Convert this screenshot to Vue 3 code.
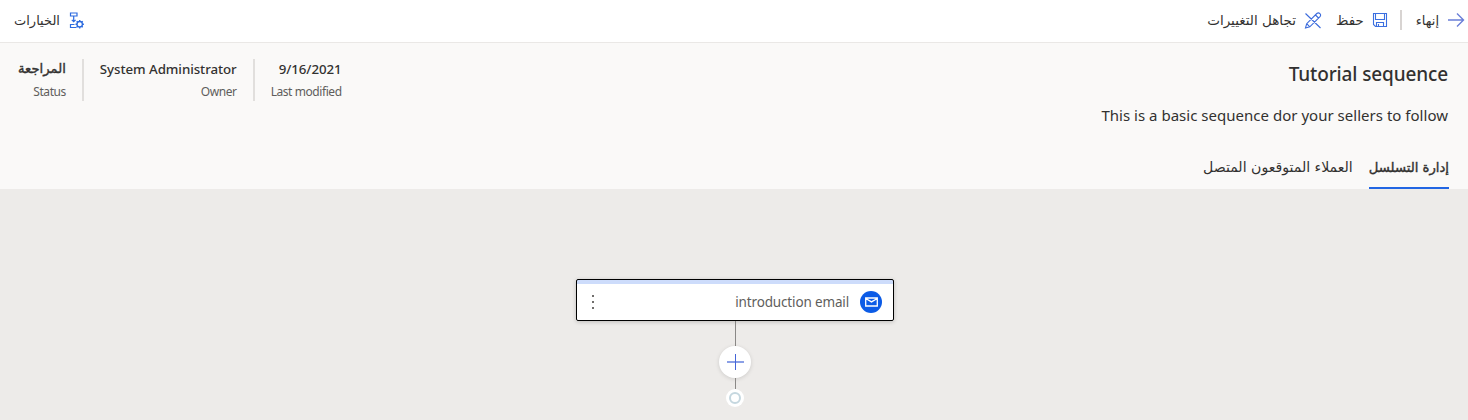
<script setup>
const facts = [
  { value: '9/16/2021', label: 'Last modified', key: 'modified' },
  { value: 'System Administrator', label: 'Owner', key: 'owner' },
  { value: 'المراجعة', label: 'Status', key: 'status', arabic: true },
]
</script>

<template>
  <div class="page" dir="rtl">
    <header class="bar">
      <div class="group">
        <button class="cmd finish">
          <svg width="17" height="16" viewBox="0 0 17 16" fill="none" stroke="#6a7fd8" stroke-width="1.4"><path d="M0 8h15.500M9 1.500 15.500 8 9 14.500" /></svg>
          <span class="ar">إنهاء</span>
        </button>
        <i class="sep"></i>
        <button class="cmd save">
          <svg width="16" height="16" viewBox="0 0 16 16" fill="none" stroke="#3b6fe0" stroke-width="1.1"><path d="M1.500 1.500h13v13h-11l-2-2zM3.500 1.500v6h9v-6M4.500 14.500v-4h7v4M6.500 12v2.500" /></svg>
          <span class="ar">حفظ</span>
        </button>
        <button class="cmd discard">
          <svg width="18" height="17" viewBox="0 0 18 17" fill="none" stroke="#3b6bdc" stroke-width="1.1"><path d="M1.500 16 2.700 11.700 12.800 1.500Q14.500 .2 15.900 1.600T16 4.700L5.800 14.800ZM11.500 3l3 3M2.700 11.700l3.100 3.100M1.500 1.500 16.500 16" /></svg>
          <span class="ar">تجاهل التغييرات</span>
        </button>
      </div>
      <button class="cmd options">
        <svg width="15" height="17" viewBox="0 0 15 17" fill="none" stroke="#2d6bdf" stroke-width="1.2"><path d="M1.500 1h6.500v3h-6.500zM4.700 4v5.500M2.800 7.800 4.700 9.700l1.900-1.900M5.500 12.500h-4v3h6" /><circle cx="10.700" cy="12.200" r="2.700" stroke-width="1.300" /><path d="M10.700 8v1.500M10.700 14.900v1.500M6.500 12.200h1.500M13.400 12.200h1.500M7.700 9.200l1.100 1.100M12.600 14.100l1.100 1.100M13.700 9.200l-1.100 1.100M8.800 14.100l-1.100 1.100" stroke-width="1.400" /></svg>
        <span class="ar">الخيارات</span>
      </button>
    </header>

    <section class="head">
      <div class="summary">
        <div class="intro" dir="ltr">
          <h1>Tutorial sequence</h1>
          <p>This is a basic sequence dor your sellers to follow</p>
        </div>
        <dl class="facts">
          <div v-for="f in facts" :key="f.key" class="fact" :class="f.key">
            <dd :class="{ ar: f.arabic }">{{ f.value }}</dd>
            <dt>{{ f.label }}</dt>
          </div>
        </dl>
      </div>
      <nav class="tabs">
        <a class="tab active ar">إدارة التسلسل</a>
        <a class="tab ar">العملاء المتوقعون المتصل</a>
      </nav>
    </section>

    <main class="canvas">
      <article class="card">
        <span class="badge">
          <svg width="13" height="10" viewBox="0 0 13 10" fill="none" stroke="#fff" stroke-width="1.300"><path d="M.7 1h11.600v8H.7zM.7 1.500l5.800 3.400 5.800-3.400" /></svg>
        </span>
        <span class="name">introduction email</span>
        <svg class="more" width="4" height="14" viewBox="0 0 4 14" fill="#706e6c"><path d="M1 0h2v2H1zM1 6h2v2H1zM1 12h2v2H1z" /></svg>
      </article>
      <i class="line first"></i>
      <button class="add">
        <svg width="17" height="16" viewBox="0 0 17 16" fill="none"><path d="M0 8h17" stroke="#8ba0e6" stroke-width="2" /><path d="M8.500 0v16" stroke="#4565d8" /></svg>
      </button>
      <i class="line second"></i>
      <span class="end"></span>
    </main>
  </div>
</template>

<style>
body { overflow: hidden; }
</style>

<style scoped>
.page { width: 1468px; height: 420px; display: flex; flex-direction: column; background: #edebe9; color: #323130; font-family: "Noto Sans", "Open Sans", "DejaVu Sans", sans-serif; }
.ar { font-family: "DejaVu Sans", sans-serif; }
button { border: 0; padding: 0; margin: 0; background: none; color: inherit; font: inherit; }
svg { display: block; flex: none; }
.bar { height: 42px; border-bottom: 1px solid #eae8e6; background: #fff; display: flex; justify-content: space-between; padding: 0 3px 0 14px; }
.group { display: flex; align-items: center; height: 40px; }
.cmd { display: flex; align-items: center; height: 40px; gap: 9px; font-size: 13px; white-space: nowrap; }
.sep { width: 2px; height: 20px; background: #d8d4d2; margin: 0 14px 0 12px; }
.save { font-size: 13.4px; gap: 8px; }
.discard { margin-right: 14px; font-size: 13.5px; gap: 8px; }
.head { height: 146px; background: #faf9f8; display: flex; flex-direction: column; justify-content: space-between; }
.summary { display: flex; justify-content: space-between; padding: 0 20px 0 18px; }
.intro { text-align: right; white-space: nowrap; }
h1 { margin: 17px 0 0; font-size: 19px; line-height: 28px; font-weight: 550; letter-spacing: -.13px; }
p { margin: 16px 0 0; font-size: 15px; line-height: 22px; letter-spacing: .02px; }
.facts { margin: 16px 0 0; display: flex; height: 42px; }
.fact { white-space: nowrap; text-align: right; direction: ltr; }
.fact + .fact { border-right: 2px solid #e1dfdd; padding-right: 16px; margin-right: 16px; }
dd { margin: 0; font-size: 13.3px; line-height: 20px; font-weight: 550; letter-spacing: -.06px; }
dd.ar { font-weight: 400; font-size: 13.2px; letter-spacing: 0; -webkit-text-stroke: .4px #323130; }
dt { font-size: 12px; line-height: 18px; color: #605e5c; margin-top: 4px; letter-spacing: -.43px; }
.tabs { display: flex; padding-right: 19px; gap: 16px; }
.tab { height: 42px; box-sizing: border-box; margin-top: 1px; border-bottom: 2px solid transparent; line-height: 41px; font-size: 14.1px; white-space: nowrap; }
.tab.active { border-color: #2266e3; font-size: 13.2px; -webkit-text-stroke: .4px #323130; }
.canvas { flex: 1; display: flex; flex-direction: column; align-items: center; padding: 90px 0 0 2px; }
.card { box-sizing: border-box; width: 318px; height: 42px; border: 1px solid #000; border-radius: 2px; background: linear-gradient(#cddcfb 4px, #fff 4px); box-shadow: 0 1px 4px #0003; display: flex; align-items: center; padding: 4px 11px 0 14px; }
.badge { width: 22px; height: 22px; border-radius: 50%; background: #0b5be6; display: grid; place-items: center; }
.name { margin-right: 11px; font-size: 13.5px; letter-spacing: -.15px; color: #605e5c; white-space: nowrap; }
.more { margin-right: auto; }
.line { width: 1px; background: #8a8886; }
.first { height: 25px; }
.second { height: 11px; }
.add { width: 32px; height: 32px; border-radius: 50%; background: #fff; box-shadow: 0 1px 4px #0002; display: grid; place-items: center; }
.end { width: 18px; height: 18px; border-radius: 50%; background: #fff; display: grid; place-items: center; }
.end::after { content: ""; width: 8px; height: 8px; border: 2px solid #c5d7df; border-radius: 50%; }
</style>
